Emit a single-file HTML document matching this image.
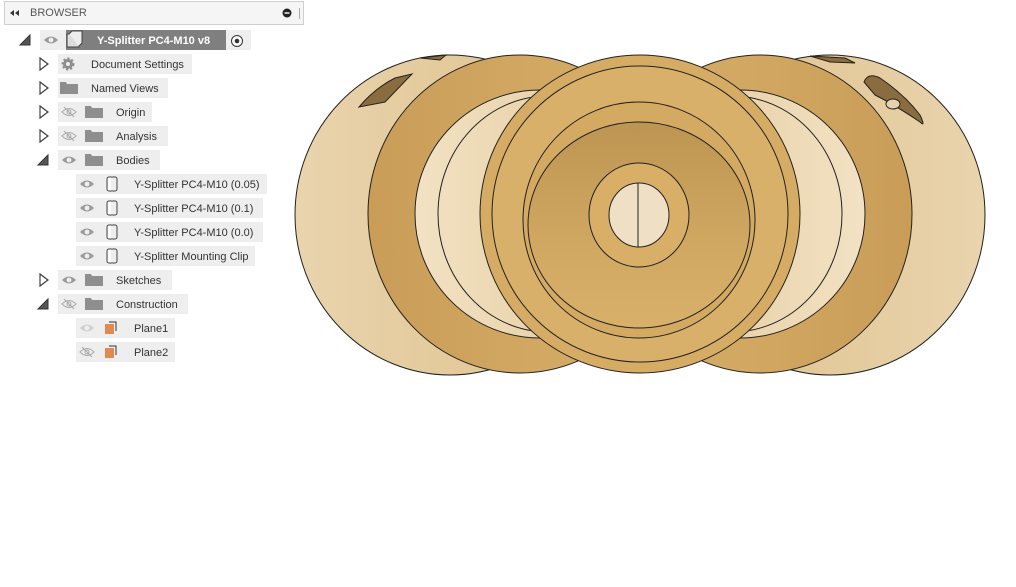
<!DOCTYPE html>
<html><head><meta charset="utf-8"><style>
html,body{margin:0;padding:0;width:1016px;height:587px;background:#fff;overflow:hidden;font-family:"Liberation Sans",sans-serif;}
.hdr{position:absolute;left:4px;top:1px;width:298px;height:22px;border:1px solid #cfcfcf;background:#f5f5f5;}
.hdr span{position:absolute;left:25px;top:5px;font-size:11px;color:#555;}
</style></head><body>
<div class="hdr"><span>BROWSER</span>
<svg style="position:absolute;left:4px;top:6px" width="12" height="10"><path d="M5 2L1 5L5 8Z M10 2L6 5L10 8Z" fill="#333"/></svg>
<svg style="position:absolute;left:277px;top:6px" width="20" height="12"><circle cx="5" cy="5" r="4.5" fill="#222"/><rect x="2.5" y="4.3" width="5" height="1.4" fill="#fff"/><rect x="17" y="0" width="1" height="11" fill="#aaa"/></svg>
</div>

<svg width="310" height="370" style="position:absolute;left:0;top:0">
<defs>
<g id="eye"><path d="M-7 0Q0 -7 7 0Q0 7 -7 0Z" fill="#9a9a9a"/><circle r="2.4" fill="#eee"/></g>
<g id="eyex"><path d="M-7 0Q0 -7 7 0Q0 7 -7 0Z" fill="none" stroke="#aaa" stroke-width="1"/><circle r="2" fill="none" stroke="#aaa"/><path d="M-5 -5L5 5" stroke="#aaa"/></g>
<g id="fold"><path d="M-9 -6h6l1 2h11v10h-18z" fill="#8e8e8e"/></g>
<g id="body"><rect x="-5" y="-7" width="10" height="14" rx="2" fill="#eee" stroke="#444" stroke-width="1"/><rect x="-4" y="-6" width="3" height="12" fill="#fff"/></g>
<g id="tr"><path d="M-4 -6L4 0L-4 6Z" fill="#fff" stroke="#333" stroke-width="1.1"/></g>
<g id="td"><path d="M4 -5L4 5L-6 5Z" fill="#555" stroke="#333" stroke-width="1"/></g>
<g id="plane"><rect x="-8" y="-4" width="9" height="10" fill="#e08a50"/><path d="M-4 -6h7v9" fill="none" stroke="#333"/></g>
</defs>
<rect x="40" y="30" width="211" height="20" fill="#eee"/>
<rect x="66" y="30" width="160" height="20" fill="#7f7f7f"/>
<use href="#td" x="26" y="40"/>
<use href="#eye" x="51" y="40"/>
<path d="M67 34h12v13h-12z" fill="#ddd" stroke="#444"/><path d="M69 34l3 -3h10v12l-3 3" fill="#eee" stroke="#444"/>
<text x="97" y="44" font-size="11" font-weight="bold" fill="#fff" font-family="Liberation Sans">Y-Splitter PC4-M10 v8</text>
<circle cx="237" cy="41" r="5.5" fill="#fff" stroke="#333"/><circle cx="237" cy="41" r="2.3" fill="#333"/>

<rect x="58" y="54" width="134" height="20" fill="#eee"/><use href="#tr" x="44" y="64"/>
<circle cx="68" cy="64" r="5" fill="#8e8e8e" stroke="#8e8e8e" stroke-width="3" stroke-dasharray="2 1.8"/><circle cx="68" cy="64" r="2" fill="#eee"/>
<text x="91" y="68" font-size="11" fill="#333">Document Settings</text>

<rect x="58" y="78" width="110" height="20" fill="#eee"/><use href="#tr" x="44" y="88"/><use href="#fold" x="69" y="88"/>
<text x="91" y="92" font-size="11" fill="#333">Named Views</text>

<rect x="58" y="102" width="94" height="20" fill="#eee"/><use href="#tr" x="44" y="112"/><use href="#eyex" x="69" y="112"/><use href="#fold" x="94" y="112"/>
<text x="116" y="116" font-size="11" fill="#333">Origin</text>

<rect x="58" y="126" width="110" height="20" fill="#eee"/><use href="#tr" x="44" y="136"/><use href="#eyex" x="69" y="136"/><use href="#fold" x="94" y="136"/>
<text x="116" y="140" font-size="11" fill="#333">Analysis</text>

<rect x="58" y="150" width="102" height="20" fill="#eee"/><use href="#td" x="44" y="160"/><use href="#eye" x="69" y="160"/><use href="#fold" x="94" y="160"/>
<text x="116" y="164" font-size="11" fill="#333">Bodies</text>

<rect x="76" y="174" width="191" height="20" fill="#eee"/><use href="#eye" x="87" y="184"/><use href="#body" x="112" y="184"/>
<text x="134" y="188" font-size="11" fill="#333">Y-Splitter PC4-M10 (0.05)</text>
<rect x="76" y="198" width="187" height="20" fill="#eee"/><use href="#eye" x="87" y="208"/><use href="#body" x="112" y="208"/>
<text x="134" y="212" font-size="11" fill="#333">Y-Splitter PC4-M10 (0.1)</text>
<rect x="76" y="222" width="187" height="20" fill="#eee"/><use href="#eye" x="87" y="232"/><use href="#body" x="112" y="232"/>
<text x="134" y="236" font-size="11" fill="#333">Y-Splitter PC4-M10 (0.0)</text>
<rect x="76" y="246" width="179" height="20" fill="#eee"/><use href="#eye" x="87" y="256"/><use href="#body" x="112" y="256"/>
<text x="134" y="260" font-size="11" fill="#333">Y-Splitter Mounting Clip</text>

<rect x="58" y="270" width="114" height="20" fill="#eee"/><use href="#tr" x="44" y="280"/><use href="#eye" x="69" y="280"/><use href="#fold" x="94" y="280"/>
<text x="116" y="284" font-size="11" fill="#333">Sketches</text>
<rect x="58" y="294" width="130" height="20" fill="#eee"/><use href="#td" x="44" y="304"/><use href="#eyex" x="69" y="304"/><use href="#fold" x="94" y="304"/>
<text x="116" y="308" font-size="11" fill="#333">Construction</text>

<rect x="76" y="318" width="99" height="20" fill="#eee"/><g opacity="0.35"><use href="#eye" x="87" y="328"/></g><use href="#plane" x="113" y="328"/>
<text x="134" y="332" font-size="11" fill="#333">Plane1</text>
<rect x="76" y="342" width="99" height="20" fill="#eee"/><use href="#eyex" x="87" y="352"/><use href="#plane" x="113" y="352"/>
<text x="134" y="356" font-size="11" fill="#333">Plane2</text>
</svg>

<svg width="1016" height="587" style="position:absolute;left:0;top:0" >
<defs>
<linearGradient id="back" x1="0" x2="1"><stop offset="0" stop-color="#e9d4ae"/><stop offset="1" stop-color="#dfc08a"/></linearGradient>
<linearGradient id="backR" x1="1" x2="0"><stop offset="0" stop-color="#e9d4ae"/><stop offset="1" stop-color="#dfc08a"/></linearGradient>
<linearGradient id="rimL" x1="0" x2="1"><stop offset="0" stop-color="#c99d58"/><stop offset="1" stop-color="#d8b06a"/></linearGradient>
<linearGradient id="rimR" x1="1" x2="0"><stop offset="0" stop-color="#c99d58"/><stop offset="1" stop-color="#d8b06a"/></linearGradient>
<linearGradient id="inL" x1="0" x2="1"><stop offset="0" stop-color="#f2e2c4"/><stop offset="1" stop-color="#e2c593"/></linearGradient>
<linearGradient id="inR" x1="1" x2="0"><stop offset="0" stop-color="#f2e2c4"/><stop offset="1" stop-color="#e2c593"/></linearGradient>
<linearGradient id="basin" x1="0" y1="0" x2="0" y2="1"><stop offset="0" stop-color="#bd9552"/><stop offset="0.6" stop-color="#d1a862"/><stop offset="1" stop-color="#d9b06a"/></linearGradient>
</defs>
<g stroke="#222" stroke-width="1">
<ellipse cx="450" cy="215" rx="155" ry="160" fill="url(#back)"/>
<ellipse cx="830" cy="215" rx="155" ry="160" fill="url(#backR)"/>
<path d="M359 107Q375 88 395 78L412 74L385 102Z" fill="#8a6c3e"/>
<path d="M420 58L446 55L440 60Z" fill="#8a6c3e"/>
<path d="M864 82Q868 72 880 78Q905 95 920 115Q926 128 920 122Q895 105 875 95Z" fill="#8a6c3e"/>
<ellipse cx="893" cy="104" rx="7" ry="5" fill="#e6d2ad"/>
<path d="M810 56L845 58L855 63L830 62Z" fill="#8a6c3e"/>
<ellipse cx="520" cy="214" rx="152" ry="159" fill="url(#rimL)"/>
<ellipse cx="760" cy="214" rx="152" ry="159" fill="url(#rimR)"/>
<ellipse cx="540" cy="214" rx="125" ry="124" fill="url(#inL)"/>
<ellipse cx="740" cy="214" rx="125" ry="124" fill="url(#inR)"/>
<ellipse cx="548" cy="214" rx="110" ry="118" fill="none"/>
<ellipse cx="732" cy="214" rx="110" ry="118" fill="none"/>
<ellipse cx="640" cy="214" rx="160" ry="159" fill="#d6ac64"/>
<ellipse cx="640" cy="214" rx="148" ry="148" fill="#d9b06a"/>
<ellipse cx="639" cy="220" rx="116" ry="118" fill="#d4aa62"/>
<ellipse cx="639" cy="225" rx="111" ry="103" fill="url(#basin)"/>
<ellipse cx="639" cy="215" rx="50" ry="52" fill="#d9af68"/>
<ellipse cx="639" cy="215" rx="30" ry="32" fill="#efdfc4"/>
<line x1="638" y1="183" x2="638" y2="247"/>
</g>
</svg>
</body></html>
